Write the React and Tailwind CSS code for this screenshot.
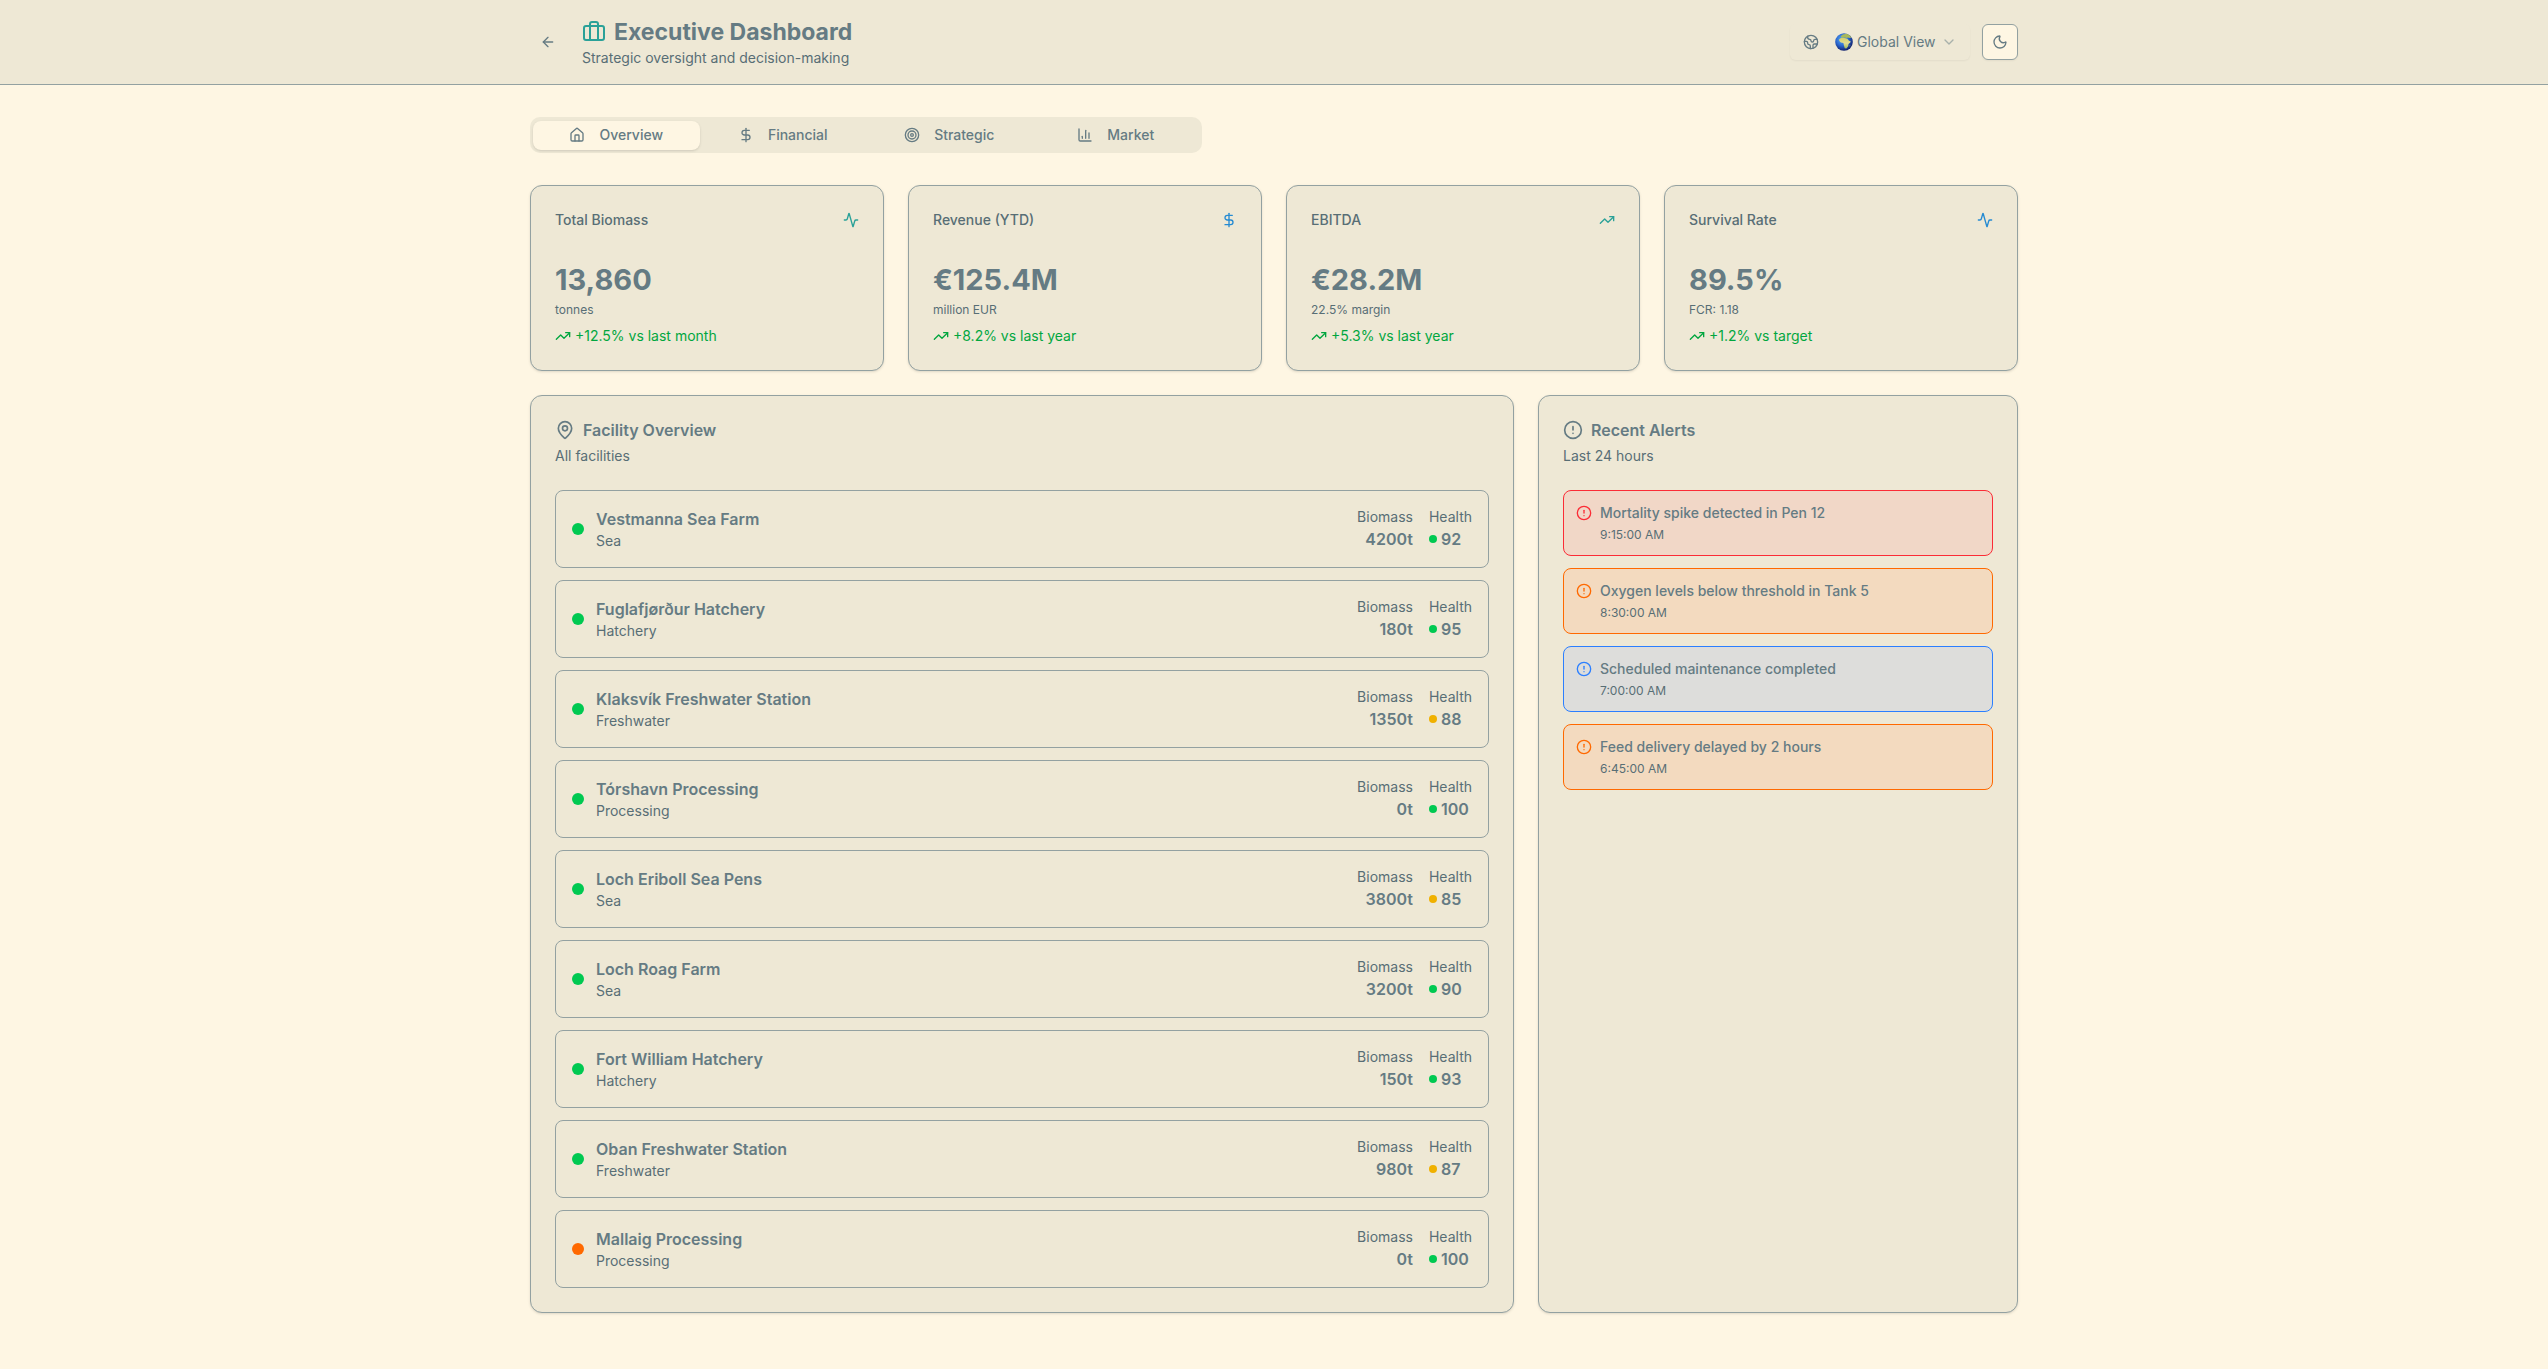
import {
  Activity,
  ArrowLeft,
  Briefcase,
  ChartColumn,
  ChevronDown,
  CircleAlert,
  DollarSign,
  Earth,
  House,
  MapPin,
  Moon,
  Target,
  TrendingUp,
} from "lucide-react";

const tabs = [
  { label: "Overview", Icon: House },
  { label: "Financial", Icon: DollarSign },
  { label: "Strategic", Icon: Target },
  { label: "Market", Icon: ChartColumn },
];

const kpis = [
  { title: "Total Biomass", value: "13,860", unit: "tonnes", trend: "+12.5% vs last month", Icon: Activity, color: "text-[#2aa198]" },
  { title: "Revenue (YTD)", value: "€125.4M", unit: "million EUR", trend: "+8.2% vs last year", Icon: DollarSign, color: "text-[#268bd2]" },
  { title: "EBITDA", value: "€28.2M", unit: "22.5% margin", trend: "+5.3% vs last year", Icon: TrendingUp, color: "text-[#2aa198]" },
  { title: "Survival Rate", value: "89.5%", unit: "FCR: 1.18", trend: "+1.2% vs target", Icon: Activity, color: "text-[#268bd2]" },
];

const facilities = [
  { name: "Vestmanna Sea Farm", type: "Sea", biomass: 4200, health: 92 },
  { name: "Fuglafjørður Hatchery", type: "Hatchery", biomass: 180, health: 95 },
  { name: "Klaksvík Freshwater Station", type: "Freshwater", biomass: 1350, health: 88 },
  { name: "Tórshavn Processing", type: "Processing", biomass: 0, health: 100 },
  { name: "Loch Eriboll Sea Pens", type: "Sea", biomass: 3800, health: 85 },
  { name: "Loch Roag Farm", type: "Sea", biomass: 3200, health: 90 },
  { name: "Fort William Hatchery", type: "Hatchery", biomass: 150, health: 93 },
  { name: "Oban Freshwater Station", type: "Freshwater", biomass: 980, health: 87 },
  { name: "Mallaig Processing", type: "Processing", biomass: 0, health: 100, maintenance: true },
];

const alertStyles = {
  critical: { box: "border-[#fb2c36] bg-[#f1d7c7]", icon: "text-[#fb2c36]" },
  warning: { box: "border-[#ff6900] bg-[#f3dabf]", icon: "text-[#ff6900]" },
  info: { box: "border-[#2b7fff] bg-[#dddddb]", icon: "text-[#2b7fff]" },
};

const alerts = [
  { level: "critical", text: "Mortality spike detected in Pen 12", time: "9:15:00 AM" },
  { level: "warning", text: "Oxygen levels below threshold in Tank 5", time: "8:30:00 AM" },
  { level: "info", text: "Scheduled maintenance completed", time: "7:00:00 AM" },
  { level: "warning", text: "Feed delivery delayed by 2 hours", time: "6:45:00 AM" },
];

function GlobeEmoji() {
  return (
    <svg viewBox="0 0 18 18" className="size-[18px] shrink-0" aria-hidden="true">
      <defs>
        <radialGradient id="sea" cx="0.4" cy="0.35" r="0.65">
          <stop offset="0" stopColor="#5fb0f0" />
          <stop offset="0.55" stopColor="#2b68cf" />
          <stop offset="1" stopColor="#12226f" />
        </radialGradient>
        <linearGradient id="land" x1="0" y1="0" x2="0" y2="1">
          <stop offset="0" stopColor="#d3cf6c" />
          <stop offset="0.5" stopColor="#e2dc92" />
          <stop offset="1" stopColor="#9fb95a" />
        </linearGradient>
      </defs>
      <circle cx="9" cy="9" r="8.8" fill="url(#sea)" />
      <path d="M5.6 3.4 7.8 1.4l3.8-.6 2.9 1.4 1.8 2.4-1.6.4-1.8-.6-1 .7-2-.6-1.6.3-1.6-.2z" fill="#a9b95a" />
      <path d="M4 6.6 6.2 4.8l3.2.1 3 .8 1.6 2.1 1.6.4-.3 1.3-1.8 1.6-.3 2.2-1.8 2.3-1.6-.3-.9-2.8-.5-2.5-2.6-.4-1.4-1.5z" fill="url(#land)" />
      <path d="M14.6 12.2l.7-.5-.2 1.5-.7.4z" fill="#9bb25a" />
    </svg>
  );
}

function Card({ className, children }) {
  return (
    <section className={`rounded-xl border border-[#93a1a1] bg-[#eee8d5] p-6 shadow-sm ${className || ""}`}>
      {children}
    </section>
  );
}

function CardHeading({ Icon, title, description }) {
  return (
    <div className="mb-6">
      <h2 className="mb-1.5 flex items-center gap-2 text-base leading-5 font-semibold">
        <Icon className="size-5" />
        {title}
      </h2>
      <p className="text-sm text-[#586e75]">{description}</p>
    </div>
  );
}

function Kpi({ title, value, unit, trend, Icon, color }) {
  return (
    <Card>
      <div className="mb-8 flex items-center justify-between">
        <h2 className="text-sm font-medium text-[#586e75]">{title}</h2>
        <Icon className={`size-4 ${color}`} />
      </div>
      <p className="text-[29px] leading-9 font-bold">{value}</p>
      <p className="mt-1 text-xs text-[#586e75]">{unit}</p>
      <p className="mt-2 flex items-center gap-1 text-sm text-green-600">
        <TrendingUp className="size-4" />
        {trend}
      </p>
    </Card>
  );
}

function Facility({ name, type, biomass, health, maintenance }) {
  return (
    <li className="flex items-center justify-between rounded-lg border border-[#93a1a1] p-4">
      <div className="flex items-center gap-3">
        <span className={`size-3 rounded-full ${maintenance ? "bg-orange-500" : "bg-green-500"}`} />
        <div>
          <h3 className="text-base font-semibold">{name}</h3>
          <p className="text-sm text-[#586e75]">{type}</p>
        </div>
      </div>
      <div className="flex gap-4">
        <div className="text-right">
          <p className="text-sm text-[#586e75]">Biomass</p>
          <p className="text-base font-semibold">{biomass}t</p>
        </div>
        <div>
          <p className="text-sm text-[#586e75]">Health</p>
          <p className="flex items-center gap-1 text-base font-semibold">
            <span className={`size-2 rounded-full ${health >= 90 ? "bg-green-500" : "bg-yellow-500"}`} />
            {health}
          </p>
        </div>
      </div>
    </li>
  );
}

export default function App() {
  return (
    <div className="min-h-screen bg-[#fef6e3] font-['Inter','Noto_Sans',sans-serif] text-[#657b83]">
      <header className="border-b border-[#93a1a1] bg-[#eee8d5]">
        <div className="mx-auto flex max-w-[1536px] items-center justify-between px-6 py-4">
          <div className="flex items-center gap-4">
            <button type="button" aria-label="Back" className="flex size-9 items-center justify-center rounded-md">
              <ArrowLeft className="size-4" />
            </button>
            <div>
              <h1 className="flex items-center gap-2 text-[23px] leading-8 font-bold">
                <Briefcase className="size-6 text-[#2aa198]" />
                Executive Dashboard
              </h1>
              <p className="text-sm text-[#586e75]">Strategic oversight and decision-making</p>
            </div>
          </div>
          <div className="flex items-center gap-3">
            <div className="relative flex h-9 w-[180px] items-center rounded-md pl-[13px] shadow-xs">
              <Earth className="mr-4 size-4 shrink-0" />
              <GlobeEmoji />
              <select
                aria-label="View"
                className="h-9 min-w-0 flex-1 appearance-none bg-transparent pl-1 text-sm"
              >
                <option>Global View</option>
              </select>
              <ChevronDown className="pointer-events-none absolute right-[13px] size-4 opacity-50" />
            </div>
            <button
              type="button"
              aria-label="Toggle theme"
              className="flex size-9 items-center justify-center rounded-md border border-[#93a1a1] bg-[#fef6e3] shadow-xs"
            >
              <Moon className="size-4" />
            </button>
          </div>
        </div>
      </header>

      <main className="mx-auto max-w-[1536px] px-6 py-8">
        <div role="tablist" className="mb-8 grid h-9 max-w-2xl grid-cols-4 items-center rounded-[10px] bg-[#eee8d5] p-[3px]">
          {tabs.map(({ label, Icon }, i) => (
            <button
              key={label}
              type="button"
              role="tab"
              aria-selected={i === 0}
              className={`flex h-[29px] items-center justify-center gap-3.5 rounded-lg text-sm font-medium ${
                i === 0 ? "bg-[#fef6e3] shadow-sm" : ""
              }`}
            >
              <Icon className="size-4" />
              {label}
            </button>
          ))}
        </div>

        <div className="mb-6 grid grid-cols-4 gap-6">
          {kpis.map((kpi) => (
            <Kpi key={kpi.title} {...kpi} />
          ))}
        </div>

        <div className="grid grid-cols-3 gap-6">
          <Card className="col-span-2">
            <CardHeading Icon={MapPin} title="Facility Overview" description="All facilities" />
            <ul className="flex flex-col gap-3">
              {facilities.map((facility) => (
                <Facility key={facility.name} {...facility} />
              ))}
            </ul>
          </Card>

          <Card>
            <CardHeading Icon={CircleAlert} title="Recent Alerts" description="Last 24 hours" />
            <ul className="flex flex-col gap-3">
              {alerts.map(({ level, text, time }) => (
                <li key={text} className={`flex gap-2 rounded-lg border p-3 ${alertStyles[level].box}`}>
                  <CircleAlert className={`mt-0.5 size-4 shrink-0 ${alertStyles[level].icon}`} />
                  <div>
                    <p className="text-sm font-medium">{text}</p>
                    <p className="mt-1 text-xs text-[#586e75]">{time}</p>
                  </div>
                </li>
              ))}
            </ul>
          </Card>
        </div>
      </main>
    </div>
  );
}
